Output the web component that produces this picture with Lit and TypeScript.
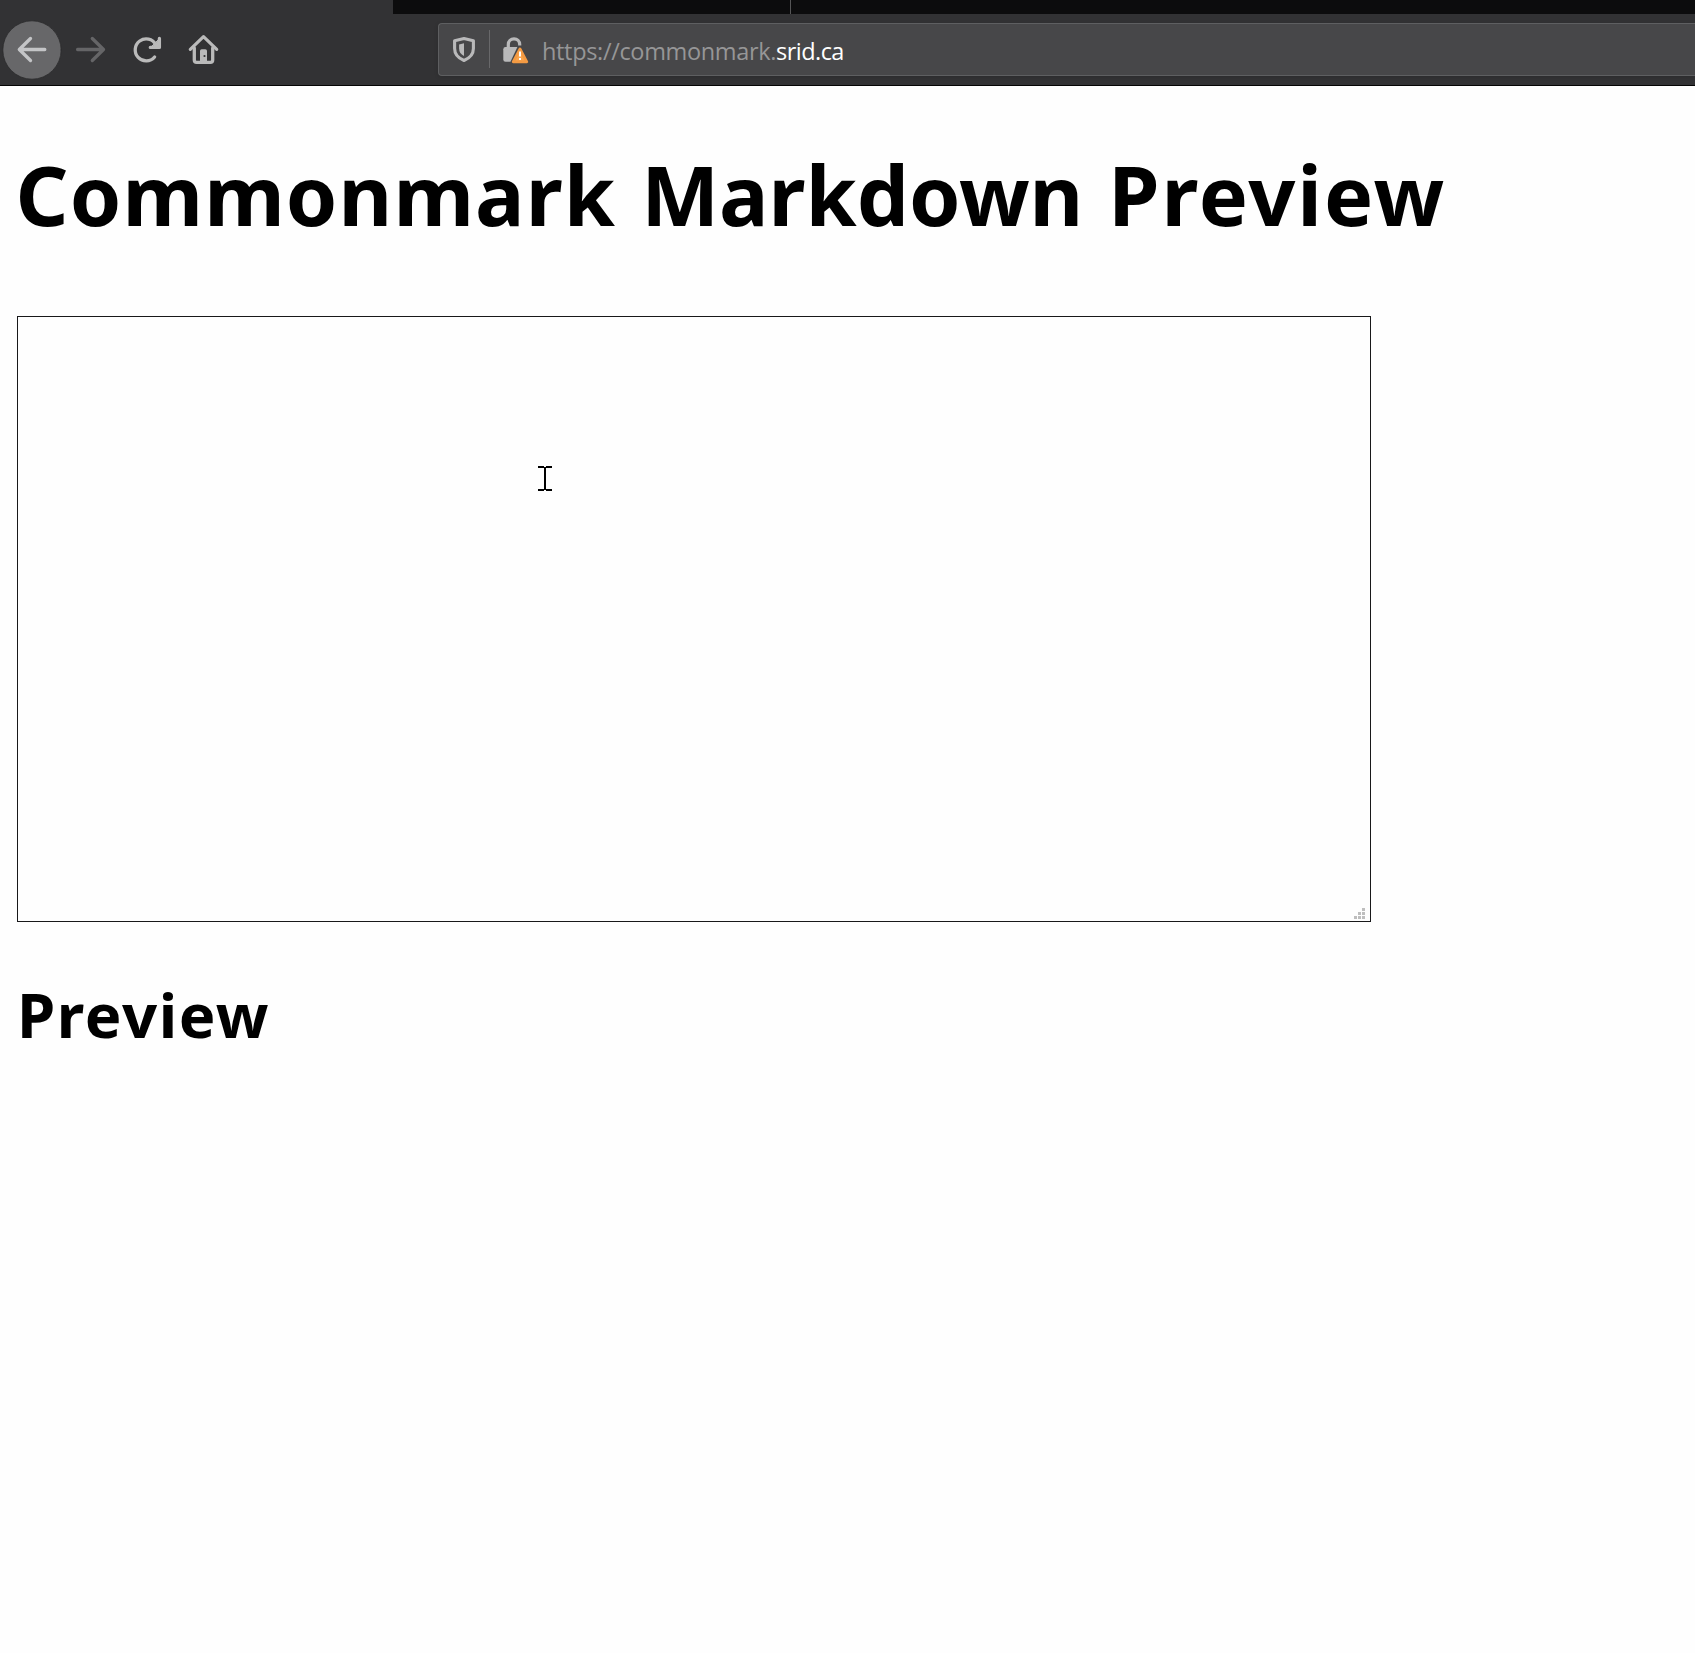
import { LitElement, html, css } from "lit";
import { customElement } from "lit/decorators.js";

@customElement("browser-bar")
class BrowserBar extends LitElement {
  static styles = css`
    :host { display: block; background: #323234; border-bottom: 1px solid #050505; height: 85px; overflow: hidden; }
    .tabs { display: flex; height: 14px; padding-left: 393px; }
    .tab { width: 397px; background: #0c0c0d; border-right: 1px solid #555556; box-sizing: content-box; flex: none; }
    .rest { flex: 1; background: #0c0c0d; }
    .bar { display: flex; height: 71px; box-sizing: border-box; padding: 5px 0 0 2px; align-items: flex-start; }
    .nav { display: flex; width: 436px; flex: none; }
    svg { display: block; flex: none; }
    .field { flex: 1; display: flex; height: 53px; box-sizing: border-box; margin-top: 4px; background: #474749; border: 1px solid #5e5f61; border-right: 0; border-radius: 4px 0 0 4px; box-shadow: 0 1px 4px rgba(0, 0, 0, 0.14); }
    .url { font: 23.5px/51px "Open Sans", "Noto Sans", sans-serif; color: #969697; white-space: pre; padding-left: 1px; padding-top: 2px; letter-spacing: -0.34px; }
    .host { color: #fff; letter-spacing: -0.55px; }
  `;
  render() {
    return html`
      <div class="tabs"><div class="tab"></div><div class="rest"></div></div>
      <div class="bar">
        <div class="nav">
          <svg width="234" height="62" viewBox="2 19 234 62" fill="none" stroke-linecap="round" stroke-linejoin="round">
            <circle cx="32" cy="50" r="29.2" fill="#676769" stroke="#29292b" stroke-width="0.8" />
            <path d="M30.5 38.5 19.3 49.5 30.5 60.5M19.5 49.5H44.8" stroke="#c4c5c7" stroke-width="3.3" />
            <path d="M92.3 38.5 103.5 49.5 92.3 60.5M103.2 49.5H77.6" stroke="#656567" stroke-width="3.3" />
            <path d="M154.6 57A11 11 0 1 1 155.8 44.5" stroke="#bababa" stroke-width="3.3" />
            <path d="M159.4 38.5V47.4H150.3" stroke="#bababa" stroke-width="3.3" />
            <path d="M158.4 40V46.4H152Z" fill="#bababa" stroke="#bababa" stroke-width="1" />
            <path d="M190.3 49.3 203.5 36.7 216.7 49.3" stroke="#bababa" stroke-width="3.2" />
            <path d="M194.3 48V60Q194.3 62.3 196.6 62.3H210.4Q212.7 62.3 212.7 60V48" stroke="#bababa" stroke-width="3.3" />
            <path d="M200 62V51Q200 49.3 201.7 49.3H205.3Q207 49.3 207 51V62Z" fill="#bababa" />
            <circle cx="204.5" cy="56" r="1.1" fill="#323234" />
          </svg>
        </div>
        <div class="field">
          <svg width="102" height="51" viewBox="439 24 102 51" fill="none">
            <path d="M464 38.6 473.4 40.7V48.5C473.4 54.5 469.5 58.2 464 60.5 458.5 58.2 454.6 54.5 454.6 48.5V40.7Z" stroke="#b9b9ba" stroke-width="3.1" stroke-linejoin="round" />
            <path d="M464 43.3V56C460.8 54.2 459.1 52 459.1 48.5V44.4Z" fill="#b9b9ba" />
            <path d="M489.5 30V68" stroke="#68686a" stroke-width="1" />
            <path d="M508.3 49V44.5A5.7 5.7 0 0 1 519.7 44.5V45.5" stroke="#b9b9ba" stroke-width="3.2" />
            <path d="M505.5 47H517.4L510.5 61.8H505.5Q503.3 61.8 503.3 59.6V49.2Q503.3 47 505.5 47Z" fill="#b9b9ba" />
            <path d="M520 49 526.8 61.8H513.2Z" fill="#faa54c" stroke="#f39a43" stroke-width="2.8" stroke-linejoin="round" />
            <path d="M520 51.5V56.5M520 58V60" stroke="#fff" stroke-width="2" />
          </svg>
          <div class="url">https://commonmark.<span class="host">srid.ca</span></div>
        </div>
      </div>`;
  }
}

@customElement("app-root")
class AppRoot extends LitElement {
  static styles = css`
    :host { display: block; height: 1653px; background: #fefefe; color: #000; overflow: hidden; }
    .page { padding: 0 17px; display: flex; flex-direction: column; align-items: flex-start; }
    h1, h2 { margin: 0; font-family: "Noto Sans", "Open Sans", sans-serif; font-weight: 700; white-space: nowrap; }
    h1 { font-size: 82.6px; line-height: 120px; margin: 48px 0 0 -1.5px; word-spacing: 3.6px; }
    .wide { letter-spacing: 1.15px; }
    .wider { letter-spacing: 1.9px; }
    h2 { font-size: 61.6px; line-height: 90px; margin-top: 47px; letter-spacing: 1.6px; }
    .editor { display: flex; align-items: flex-end; justify-content: flex-end; position: relative; width: 1354px; height: 606px; box-sizing: border-box; border: 1px solid #18181a; background: #fefefe; margin-top: 62px; padding: 0 5px 2px 0; }
    .grip { display: block; }
    .cursor { position: absolute; left: 520px; top: 149px; }
  `;
  render() {
    return html`
      <browser-bar></browser-bar>
      <main class="page">
        <h1><span class="wide">Commonmark</span> Markdown <span class="wider">Preview</span></h1>
        <div class="editor">
          <svg class="cursor" width="14" height="25" viewBox="0 0 14 25" shape-rendering="crispEdges">
            <path d="M0 0H6V1H8V0H14V2H8V23H14V25H8V24H6V25H0V23H6V2H0Z" />
          </svg>
          <svg class="grip" width="11" height="11" viewBox="0 0 11 11" fill="#bebebe" shape-rendering="crispEdges">
            <path d="M8 0h3v3h-3zM4 4h3v3h-3zM8 4h3v3h-3zM0 8h3v3h-3zM4 8h3v3h-3zM8 8h3v3h-3z" />
          </svg>
        </div>
        <h2>Preview</h2>
      </main>`;
  }
}
